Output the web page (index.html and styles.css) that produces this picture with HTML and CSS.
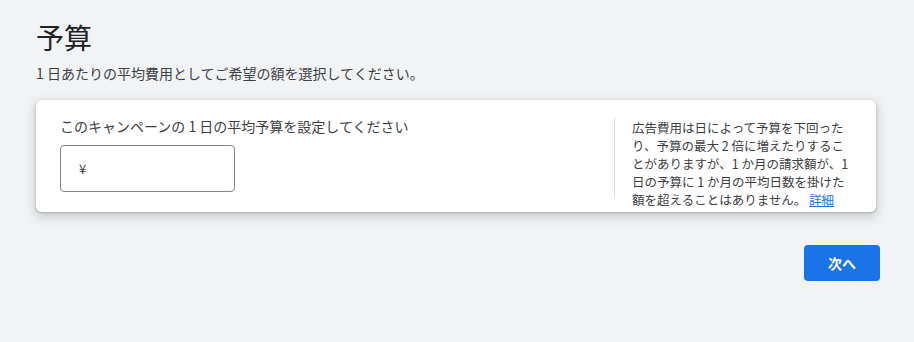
FILE: index.html
```html
<!DOCTYPE html>
<html lang="ja">
<head>
<meta charset="utf-8">
<link rel="stylesheet" href="styles.css">
</head>
<body>
<div class="page">
  <h1 class="title">予算</h1>
  <p class="subtitle">1 日あたりの平均費用としてご希望の額を選択してください。</p>
  <div class="card">
    <div class="main">
      <div class="label">このキャンペーンの 1 日の平均予算を設定してください</div>
      <div class="input"><span class="yen">¥</span></div>
    </div>
    <div class="side">
      <p class="note">広告費用は日によって予算を下回ったり、予算の最大 2 倍に増えたりすることがありますが、1 か月の請求額が、1 日の予算に 1 か月の平均日数を掛けた額を超えることはありません。 <a class="link" href="#">詳細</a></p>
    </div>
  </div>
  <div class="actions">
    <button class="next">次へ</button>
  </div>
</div>
</body>
</html>
```

FILE: styles.css
```css
html, body {
  margin: 0;
  padding: 0;
  background: #f1f3f4;
  font-family: "Noto Sans CJK JP", "Noto Sans", sans-serif;
  color: #202124;
}
.page {
  padding: 19px 38px 0 36px;
}
.title {
  margin: 0;
  font-size: 28px;
  font-weight: 400;
  line-height: 36px;
  color: #202124;
}
.subtitle {
  margin: 8px 0 0 0;
  font-size: 14px;
  line-height: 20px;
  color: #3c4043;
}
.card {
  margin-top: 17px;
  background: #fff;
  border-radius: 6px;
  box-shadow: 0 1px 3px rgba(60,64,67,0.3), 0 4px 8px 3px rgba(60,64,67,0.15);
  display: flex;
  height: 112px;
}
.main {
  flex: 1;
  padding: 16px 24px;
}
.label {
  font-size: 14px;
  line-height: 20px;
  color: #3c4043;
}
.input {
  margin-top: 9px;
  width: 175px;
  height: 47px;
  border: 1px solid #80868b;
  border-radius: 4px;
  display: flex;
  align-items: center;
  padding-left: 18px;
  box-sizing: border-box;
}
.yen {
  font-size: 13px;
  color: #3c4043;
}
.side {
  margin: 18px 0 15px 0;
  width: 262px;
  border-left: 1px solid #dadce0;
  padding-left: 17px;
  padding-top: 1px;
  box-sizing: border-box;
}
.note {
  margin: 0;
  width: 221px;
  font-size: 12.5px;
  line-height: 18px;
  color: #3c4043;
}
.link {
  color: #1a73e8;
  text-decoration: underline;
}
.actions {
  display: flex;
  justify-content: flex-end;
  margin-top: 33px;
  margin-right: -4px;
}
.next {
  width: 76px;
  height: 36px;
  background: #1a73e8;
  color: #fff;
  border: none;
  border-radius: 4px;
  font-family: "Noto Sans CJK JP", sans-serif;
  font-size: 14px;
  font-weight: 700;
}
```
